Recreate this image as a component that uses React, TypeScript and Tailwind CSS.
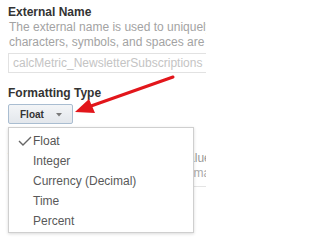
export default function App() {
    return (
        <div className="relative w-[206px] h-[240px] overflow-hidden bg-white font-['Liberation_Sans',Arial,sans-serif]">
            <div className="w-[420px] pl-[8px] pt-[5px]">
                {/* External name */}
                <h3 className="text-[12px] leading-[15px] font-bold text-[#333]">External Name</h3>
                <p className="text-[12px] leading-[15px] text-[#a3a3a3] pl-[1px] whitespace-nowrap">
                    The external name is used to uniquely identify this metric. Special
                    <br />
                    characters, symbols, and spaces are not allowed.
                </p>
                <div className="mt-[3px] h-[20px] w-[360px] border border-[#e2e2e2] flex items-center pl-[4px]">
                    <span className="text-[12px] text-[#c4c4c4]">calcMetric_NewsletterSubscriptions</span>
                </div>

                {/* Formatting type */}
                <h3 className="mt-[13px] text-[12px] leading-[15px] font-bold text-[#333]">Formatting Type</h3>
                <button className="mt-[3px] h-[20px] w-[65px] flex items-center pl-[11px] border border-[#a9bdd1] rounded-[2px] bg-gradient-to-b from-[#f3f5f7] to-[#e3e7ec]">
                    <span className="text-[10px] font-bold text-[#333]">Float</span>
                    <svg width="6" height="4" viewBox="0 0 6 4" className="ml-[12px] mt-[2px]">
                        <path d="M0 0 L6 0 L3 3.5 Z" fill="#7a7a7a" />
                    </svg>
                </button>

                {/* content behind the menu */}
                <div className="mt-[27px] whitespace-nowrap">
                    <p className="text-[12px] leading-[15px] text-[#999]">The formatting type defines how values are displayed in the report of</p>
                    <p className="text-[12px] leading-[15px] text-[#aaa]">the metric builder, for instance decimal places or the currency si</p>
                    <div className="mt-[5px] h-px w-[400px] bg-[#e4e4e4]" />
                    <p className="mt-[2px] text-[12px] leading-[15px] font-bold text-[#666]">Include in Report Suite Serie</p>
                </div>
            </div>

            {/* Dropdown menu */}
            <div className="absolute left-[8px] top-[127px] w-[186px] h-[106px] bg-white border border-[#cfcfcf] shadow-[0_1px_3px_rgba(0,0,0,0.15)] pt-[3px]">
                <ul className="text-[12px] text-[#595959]">
                    <li className="h-[20px] flex items-center">
                        <svg width="14" height="10" viewBox="0 0 14 10" className="ml-[9px] mr-[1px]">
                            <path d="M1 5 L5 9 L13 1" fill="none" stroke="#666" strokeWidth="1.4" />
                        </svg>
                        <span className="text-[#555]">Float</span>
                    </li>
                    <li className="h-[20px] flex items-center pl-[24px]">Integer</li>
                    <li className="h-[20px] flex items-center pl-[24px]">Currency (Decimal)</li>
                    <li className="h-[20px] flex items-center pl-[24px]">Time</li>
                    <li className="h-[20px] flex items-center pl-[24px]">Percent</li>
                </ul>
            </div>

            {/* Red callout arrow */}
            <svg className="absolute left-0 top-0" width="206" height="240" viewBox="0 0 206 240">
                <line x1="173" y1="77" x2="91" y2="106" stroke="#e2161b" strokeWidth="3" strokeLinecap="round" />
                <polygon points="75,112 95,113 89,99" fill="#e2161b" />
            </svg>
        </div>
    );
}
